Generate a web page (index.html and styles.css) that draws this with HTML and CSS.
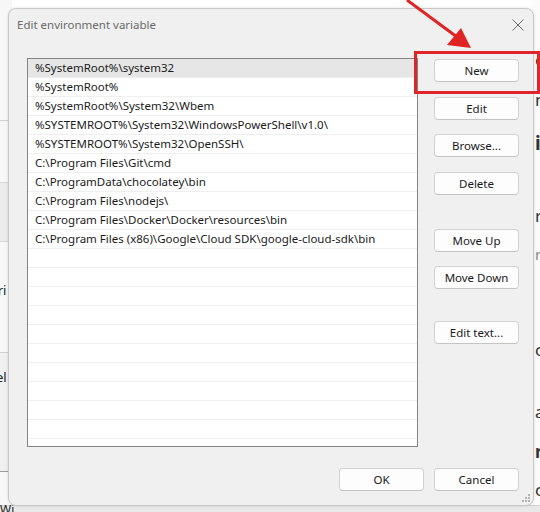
FILE: index.html
```html
<!DOCTYPE html>
<html>
<head>
<meta charset="utf-8">
<link rel="stylesheet" href="styles.css">
</head>
<body>
<div class="desk">
  <div class="backwin">
    <div class="bw-left">
      <div class="bw-band b1"></div>
      <div class="bw-band b2"></div>
      <div class="bw-text t1">tri</div>
      <div class="bw-band b3"></div>
      <div class="bw-text t2">el</div>
    </div>
    <div class="bw-right">
      <span class="r1">e</span>
      <span class="r2">n</span>
      <span class="r3">i</span>
      <span class="r4">r</span>
      <span class="r5">r</span>
      <span class="r6">c</span>
      <span class="r7">a</span>
      <span class="r8">n</span>
      <span class="r9">c</span>
    </div>
    <div class="bw-bottom"><span class="wi">Wi</span></div>
  </div>

  <div class="dialog">
    <div class="titlebar">
      <span class="title">Edit environment variable</span>
      <svg class="close" width="12" height="12" viewBox="0 0 12 12"><path d="M0.5 0.5 L11.5 11.5 M11.5 0.5 L0.5 11.5" stroke="#6b6b6b" stroke-width="1" fill="none"/></svg>
    </div>
    <div class="body">
      <div class="list">
        <div class="row sel">%SystemRoot%\system32</div>
        <div class="row">%SystemRoot%</div>
        <div class="row">%SystemRoot%\System32\Wbem</div>
        <div class="row">%SYSTEMROOT%\System32\WindowsPowerShell\v1.0\</div>
        <div class="row">%SYSTEMROOT%\System32\OpenSSH\</div>
        <div class="row">C:\Program Files\Git\cmd</div>
        <div class="row">C:\ProgramData\chocolatey\bin</div>
        <div class="row">C:\Program Files\nodejs\</div>
        <div class="row">C:\Program Files\Docker\Docker\resources\bin</div>
        <div class="row">C:\Program Files (x86)\Google\Cloud SDK\google-cloud-sdk\bin</div>
        <div class="row"></div>
        <div class="row"></div>
        <div class="row"></div>
        <div class="row"></div>
        <div class="row"></div>
        <div class="row"></div>
        <div class="row"></div>
        <div class="row"></div>
        <div class="row"></div>
        <div class="row"></div>
        <div class="row"></div>
      </div>
      <div class="side">
        <button class="btn">New</button>
        <button class="btn g15">Edit</button>
        <button class="btn g14">Browse...</button>
        <button class="btn g15">Delete</button>
        <button class="btn g34">Move Up</button>
        <button class="btn g14">Move Down</button>
        <button class="btn g32">Edit text...</button>
      </div>
    </div>
    <div class="footer">
      <button class="btn">OK</button>
      <button class="btn">Cancel</button>
    </div>
    <svg class="grip" width="10" height="10" viewBox="0 0 10 10">
      <g fill="#b5b5b5">
        <rect x="7" y="1" width="2" height="2"/>
        <rect x="4" y="4" width="2" height="2"/>
        <rect x="7" y="4" width="2" height="2"/>
        <rect x="1" y="7" width="2" height="2"/>
        <rect x="4" y="7" width="2" height="2"/>
        <rect x="7" y="7" width="2" height="2"/>
      </g>
    </svg>
  </div>

  <div class="highlight"></div>
  <svg class="arrow" width="540" height="100" viewBox="0 0 540 100">
    <line x1="407" y1="0" x2="457" y2="37" stroke="#e02424" stroke-width="3"/>
    <polygon points="471,48 447,45 461,28" fill="#e02424"/>
  </svg>
</div>
</body>
</html>
```
FILE: styles.css
```css
* { box-sizing: border-box; }
html, body { margin: 0; padding: 0; }
body {
  width: 540px;
  height: 512px;
  overflow: hidden;
  font-family: "Noto Sans", "Open Sans", sans-serif;
  font-size: 11.5px;
  color: #1a1a1a;
  background: #ffffff;
}
.desk {
  position: relative;
  width: 540px;
  height: 512px;
  overflow: hidden;
}

/* background window fragments */
.backwin { position: absolute; inset: 0; }
.bw-left {
  position: absolute; left: 0; top: 0; width: 12px; height: 512px;
  background: #f7f7f7;
}
.bw-band { position: absolute; left: 0; width: 12px; }
.b1 { top: 120px; height: 62px; border-top: 1px solid #cfcfcf; background: #f7f7f7; }
.b2 { top: 182px; height: 60px; border-top: 1px solid #d9d9d9; border-bottom: 1px solid #d9d9d9; background: #ececec; }
.b3 { top: 352px; height: 120px; border-top: 1px solid #cfcfcf; border-bottom: 1px solid #9a9a9a; background: #f0f0f0; }
.bw-text { position: absolute; left: -7px; font-size: 13px; color: #222; z-index: 1; }
.t1 { top: 281px; }
.t2 { top: 368px; left: -4px; }
.bw-right {
  position: absolute; left: 532px; top: 0; width: 8px; height: 512px;
  background: #fbfbfb; font-size: 17px; color: #333;
}
.bw-right span { position: absolute; left: 3px; }
.r1 { top: 48px; }
.r2 { top: 88px; }
.r3 { top: 130px; font-weight: 700; font-size: 19px; }
.r4 { top: 204px; }
.r5 { top: 244px; color: #888; font-size: 15px; }
.r6 { top: 338px; }
.r7 { top: 400px; }
.r8 { top: 440px; font-weight: 700; }
.r9 { top: 478px; }
.bw-bottom {
  position: absolute; left: 0; top: 505px; width: 540px; height: 7px;
  background: #e9e9e9; border-top: 1px solid #d0d0d0;
}
.wi { position: absolute; left: 0; top: -2px; font-size: 12px; color: #222; line-height: 12px; }

/* dialog */
.dialog {
  position: absolute;
  left: 8px; top: 8px;
  width: 526px; height: 498px;
  background: #f0f0f0;
  border: 1px solid #c9c9c9;
  border-radius: 8px;
  box-shadow: 0 0 3px rgba(0,0,0,0.12);
  display: flex;
  flex-direction: column;
}
.titlebar {
  height: 31px;
  display: flex;
  align-items: center;
  justify-content: space-between;
  padding: 0 9px 0 8px;
}
.title { color: #6a6a6a; font-size: 11.5px; }

.body {
  display: flex;
  gap: 16px;
  padding: 18px 14px 0 18px;
  flex: 1;
}
.list {
  width: 392px;
  height: 389px;
  border: 1px solid #848484;
  background: #ffffff;
  overflow: hidden;
}
.row {
  height: 19px;
  line-height: 18px;
  padding-left: 7px;
  border-bottom: 1px solid #efefef;
  white-space: nowrap;
  color: #1a1a1a;
}
.row.sel { background: #e6e6e6; }

.side {
  display: flex;
  flex-direction: column;
  padding-top: 1px;
}
.btn {
  width: 85px;
  height: 23px;
  padding: 0;
  font-family: inherit;
  font-size: 11.5px;
  color: #1a1a1a;
  background: #fdfdfd;
  border: 1px solid #d2d2d2;
  border-bottom-color: #c4c4c4;
  border-radius: 4px;
  line-height: 20px;
}
.g15 { margin-top: 15px; }
.g14 { margin-top: 14px; }
.g34 { margin-top: 34px; }
.g32 { margin-top: 32px; }

.footer {
  display: flex;
  justify-content: flex-end;
  gap: 10px;
  padding: 0 14px 14px 0;
}
.grip { position: absolute; right: 2px; bottom: 2px; }

.highlight {
  position: absolute;
  left: 414px; top: 51px;
  width: 126px; height: 43px;
  border: 3px solid #e0242b;
}
.arrow { position: absolute; left: 0; top: 0; }
```
